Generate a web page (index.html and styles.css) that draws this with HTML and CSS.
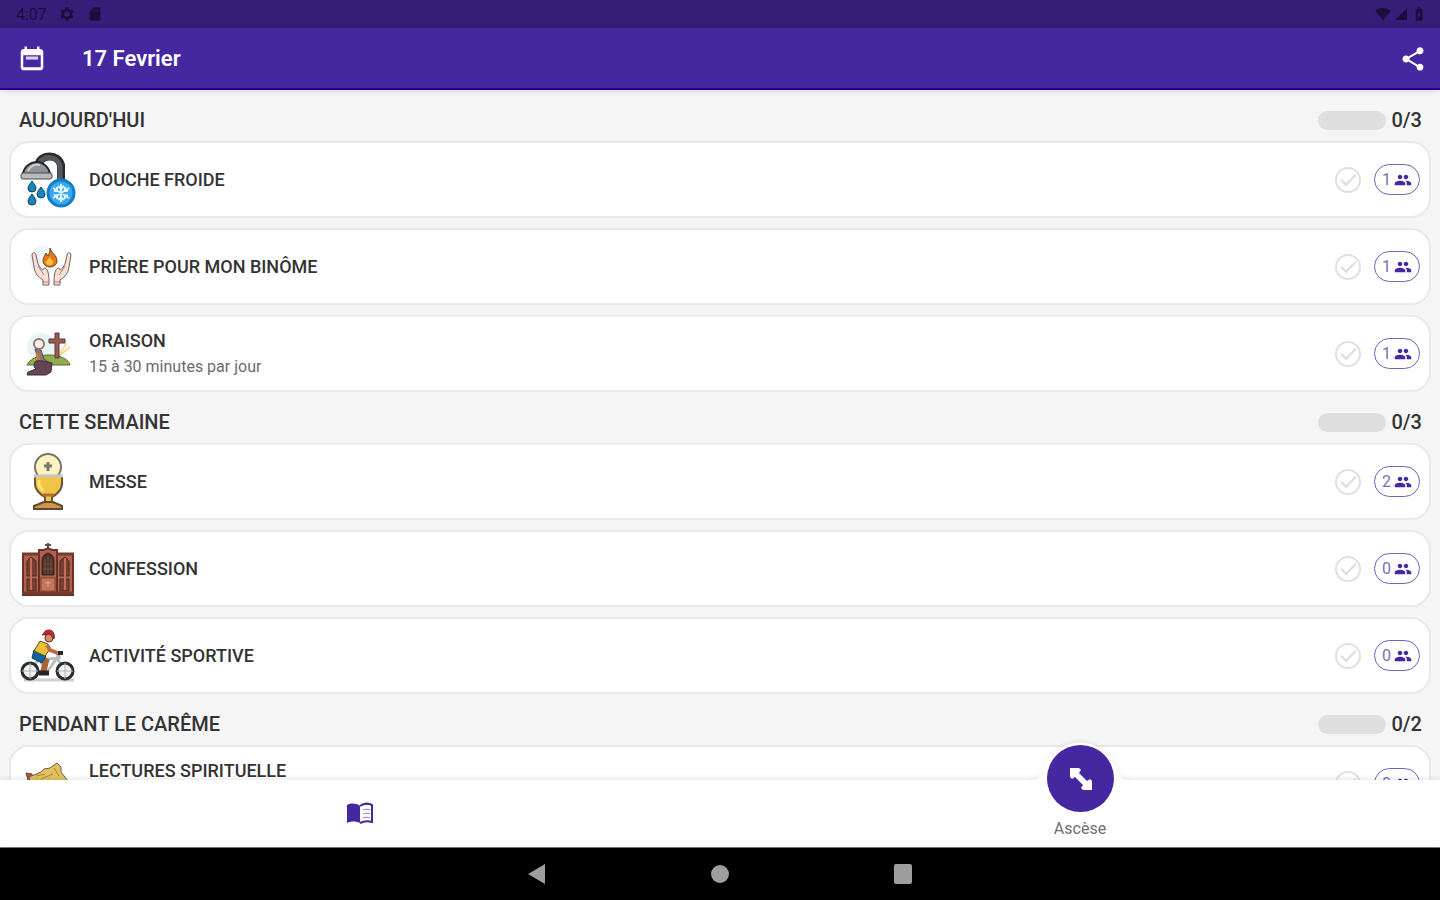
FILE: index.html
```html
<!DOCTYPE html>
<html lang="fr">
<head>
  <meta charset="UTF-8" />
  <meta name="viewport" content="width=device-width, initial-scale=1.0" />
  <title>17 Fevrier</title>
  <link rel="stylesheet" href="styles.css">
</head>
<body>

  <!-- Shared icons -->
  <svg class="sprite" aria-hidden="true">
    <symbol id="people" viewBox="0 0 24 24">
      <path d="M16 11c1.66 0 2.99-1.34 2.99-3S17.66 5 16 5s-3 1.34-3 3 1.34 3 3 3zm-8 0c1.66 0 2.99-1.34 2.99-3S9.66 5 8 5 5 6.34 5 8s1.34 3 3 3zm0 2c-2.33 0-7 1.17-7 3.500V19h14v-2.500C15 14.170 10.330 13 8 13zm8 0c-.29 0-.62.02-.97.05 1.160.84 1.970 1.970 1.970 3.450V19h6v-2.500c0-2.330-4.670-3.500-7-3.500z" />
    </symbol>
  </svg>

  <div class="status-bar">
    <div class="status-group">
      <span>4:07</span>
      <svg class="status-icon" viewBox="0 0 24 24"><circle cx="12" cy="12" r="6" fill="none" stroke="currentColor" stroke-width="4" /><path d="M12 2v4M12 18v4M3.300 7l3.500 2M17.200 15l3.500 2M3.300 17l3.500-2M17.200 9l3.500-2" stroke="currentColor" stroke-width="5" /></svg>
      <svg class="status-icon" viewBox="0 0 24 24"><path d="M10 2h8c1.100 0 2 .9 2 2v16c0 1.100-.9 2-2 2H6c-1.100 0-2-.9-2-2V8z" /><path d="M9 6v3M12 5v4M15 5v4" stroke="#361d78" stroke-width="1" /></svg>
    </div>
    <div class="status-group right">
      <svg class="status-icon" viewBox="0 0 24 24"><path d="M12 21.500L.4 7C.8 6.700 5 3 12 3s11.200 3.700 11.600 4z" /></svg>
      <svg class="status-icon" viewBox="0 0 24 24"><path d="M3 21h18V3z" /></svg>
      <svg class="status-icon" viewBox="0 0 24 24"><path fill-rule="evenodd" d="M15.700 4H14V2h-4v2H8.300C7.600 4 7 4.600 7 5.300v15.400c0 .7.600 1.300 1.300 1.300h7.400c.7 0 1.300-.6 1.300-1.300V5.300c0-.7-.6-1.300-1.300-1.300zM11 19v-5H9.500L13 8v5h1.500z" /></svg>
    </div>
  </div>

  <header class="app-bar">
    <button class="icon-button" aria-label="Calendrier">
      <svg class="calendar-icon" viewBox="0 0 24 24"><path fill-rule="evenodd" d="M18.500 4H18V2h-2v2H8V2H6v2h-.5C4 4 3 5 3 6.500v12C3 20 4 21 5.500 21h13c1.500 0 2.500-1 2.500-2.500v-12C21 5 20 4 18.500 4zm.5 14.500H5V9h14v9.500z" /><path d="M7 10h10v2.500H7z" opacity=".8" /></svg>
    </button>
    <h1>17 Fevrier</h1>
    <button class="icon-button" aria-label="Partager">
      <svg class="share-icon" viewBox="0 0 24 24"><path d="M18 16.080c-.76 0-1.440.3-1.960.77L8.910 12.700c.05-.23.09-.46.09-.7s-.04-.47-.09-.7l7.050-4.110c.54.5 1.250.81 2.040.81 1.660 0 3-1.340 3-3s-1.340-3-3-3-3 1.340-3 3c0 .24.04.47.09.7L8.040 9.810C7.500 9.310 6.790 9 6 9c-1.660 0-3 1.340-3 3s1.340 3 3 3c.79 0 1.500-.31 2.040-.81l7.120 4.160c-.05.21-.08.43-.08.65 0 1.610 1.310 2.920 2.920 2.920s2.920-1.310 2.920-2.920-1.310-2.920-2.920-2.920z" /></svg>
    </button>
  </header>

  <main class="content">
    <section>
      <div class="section-header">
        <h2>AUJOURD'HUI</h2>
        <div class="progress"></div>
        <span class="count">0/3</span>
      </div>
      <ul class="cards">
        <li class="card">
          <!-- shower -->
          <svg class="picture" viewBox="0 0 54 54">
            <path d="M18 10C20 2 37 0 40 12V29" fill="none" stroke="#292c2f" stroke-width="8" />
            <path d="M19 9C23 3 36 2 39 13V29" fill="none" stroke="#56595c" stroke-width="5" />
            <path d="M2 21C3 13 10 9 16 9s12 5 13 12z" fill="#919497" stroke="#25282b" stroke-width="2" />
            <path d="M7 18c2-5 7-7 12-6" fill="none" stroke="#d0d2d3" stroke-width="2" />
            <rect x="0" y="20" width="31" height="6" rx="2" fill="#b9bbbc" stroke="#45484b" />
            <path d="M11 28c-2 3-4 5-4 7a4 4 0 0 0 8 0c0-2-2-4-4-7zM20 34c-2 3-4 5-4 7a4 4 0 0 0 8 0c0-2-2-4-4-7zM11 41c-2 3-4 5-4 7a4 4 0 0 0 8 0c0-2-2-4-4-7z" fill="#1685c1" stroke="#173e55" />
            <circle cx="40" cy="40" r="13" fill="#36a9f1" stroke="#137cc3" stroke-width="3" />
            <path d="M40 31v18M32 35l16 10M32 45l16-10M37 33l3 3 3-3M37 47l3-3 3 3M33 38l3-1v-3M47 42l-3 1v3M33 42l3 1v3M47 38l-3-1v-3" fill="none" stroke="#dff5ff" stroke-width="2" />
          </svg>
          <div class="card-text"><h3>DOUCHE FROIDE</h3></div>
          <input type="checkbox" class="tick" aria-label="Douche froide">
          <button class="badge">1 <svg><use href="#people" /></svg></button>
        </li>
        <li class="card">
          <!-- hands around a flame -->
          <svg class="picture" viewBox="0 0 54 54">
            <circle cx="22" cy="20" r="14" fill="#edf7fa" />
            <path d="M22 45v-5c-6-4-8-7-9-13l-2-12c0-3 4-3 4 0l2 9c2 3 3 5 5 6 1-4 4-1 5 2 1 4 1 8 1 13z" fill="#f8ded3" stroke="#76635f" stroke-width="1" />
            <path d="M39 45v-5c6-4 8-7 9-13l2-12c0-3-4-3-4 0l-2 9c-2 3-3 5-5 6-1-4-4-1-5 2-1 4-1 8-1 13z" fill="#f8ded3" stroke="#76635f" stroke-width="1" />
            <path d="M17 26l6 9M44 26l-6 9M21 42h7M33 42h7" stroke="#a67f75" />
            <path d="M29 8c1 5 7 7 7 13a7 6 0 0 1-14 0c0-4 2-5 3-8l2 3c2-3 2-5 2-8z" fill="#e77818" stroke="#794117" />
            <path d="M29 17c1 3 4 3 3 6-1 3-6 3-7 0-1-2 2-3 4-6z" fill="#ffc13c" />
          </svg>
          <div class="card-text"><h3>PRIÈRE POUR MON BINÔME</h3></div>
          <input type="checkbox" class="tick" aria-label="Prière pour mon binôme">
          <button class="badge">1 <svg><use href="#people" /></svg></button>
        </li>
        <li class="card">
          <!-- kneeling figure and cross -->
          <svg class="picture" viewBox="0 0 54 54">
            <circle cx="20" cy="20" r="14" fill="#e8f3f6" />
            <path d="M38 29l11-9M39 26l7-10" stroke="#f7d99a" stroke-width="2" />
            <path d="M6 38c2-5 10-10 22-10s20 5 21 10z" fill="#91ac4b" stroke="#56672f" />
            <path d="M34 6h4v6h6v4h-6v15h-4V16h-6v-4h6z" fill="#965c51" stroke="#5b3936" />
            <path d="M14 22l6 1 3 9 4 3-2 3-7-3z" fill="#8d7770" stroke="#574744" />
            <path d="M16 26l2 9" stroke="#c77a3d" stroke-width="3" />
            <path d="M15 34c6-1 12 1 16 2l-1 9-5 3H6l1-3 8-3c-3-2-2-6 0-8z" fill="#664353" stroke="#3e3039" />
            <circle cx="18" cy="17" r="5" fill="#fff4ed" stroke="#8a7773" stroke-width="2" />
          </svg>
          <div class="card-text">
            <h3>ORAISON</h3>
            <p>15 à 30 minutes par jour</p>
          </div>
          <input type="checkbox" class="tick" aria-label="Oraison">
          <button class="badge">1 <svg><use href="#people" /></svg></button>
        </li>
      </ul>
    </section>

    <section>
      <div class="section-header">
        <h2>CETTE SEMAINE</h2>
        <div class="progress"></div>
        <span class="count">0/3</span>
      </div>
      <ul class="cards">
        <li class="card">
          <!-- chalice -->
          <svg class="picture" viewBox="0 0 54 54">
            <circle cx="27" cy="12" r="13" fill="#fff2c2" stroke="#77766b" stroke-width="2" />
            <path d="M27 7v9M23 11h8" stroke="#77786d" stroke-width="3" />
            <path d="M14 21h27v8c0 6-6 11-10 13v6h-7v-6c-4-2-10-7-10-13z" fill="#f1c443" stroke="#6a563a" stroke-width="2" />
            <path d="M18 25v5l4 6" fill="none" stroke="#ffe47d" stroke-width="3" />
            <path d="M13 21h29" stroke="#c7c5bd" stroke-width="3" />
            <path d="M22 40h11" stroke="#b46c2f" stroke-width="3" />
            <path d="M23 47h9l9 4v3H13v-3z" fill="#d59547" stroke="#5d4939" stroke-width="2" />
          </svg>
          <div class="card-text"><h3>MESSE</h3></div>
          <input type="checkbox" class="tick" aria-label="Messe">
          <button class="badge">2 <svg><use href="#people" /></svg></button>
        </li>
        <li class="card">
          <!-- confessional -->
          <svg class="picture" viewBox="0 0 54 54">
            <path d="M27 1v7M24 3h6" stroke="#56504f" stroke-width="2" />
            <path d="M2 12h16V8h5l4-2 4 2h5v4h16v41H2z" fill="#b35f49" stroke="#633427" stroke-width="2" />
            <path d="M6 19l4-4 5 4v15H6zM39 19l5-4 4 4v15h-9zM6 37h9v12H6zM39 37h9v12h-9z" fill="#7b3d31" stroke="#4c2a26" />
            <path d="M10 16v32M44 16v32" stroke="#c17056" stroke-width="2" />
            <path d="M21 33V18c0-4 3-6 6-7 3 1 6 3 6 7v15z" fill="#49302c" stroke="#37231f" />
            <path d="M24 17v15M27 14v18M30 17v15M22 22h10M22 27h10" stroke="#76503f" />
            <path d="M18 12v39M36 12v39" stroke="#5f3329" stroke-width="2" />
            <rect x="20" y="36" width="14" height="13" fill="#c4755b" stroke="#85442f" />
            <path d="M27 39v6M24 41h6" stroke="#e4a386" />
            <path d="M1 12h17M36 12h17M1 51h52" stroke="#753c2e" stroke-width="3" />
          </svg>
          <div class="card-text"><h3>CONFESSION</h3></div>
          <input type="checkbox" class="tick" aria-label="Confession">
          <button class="badge">0 <svg><use href="#people" /></svg></button>
        </li>
        <li class="card">
          <!-- cyclist -->
          <svg class="picture" viewBox="0 0 54 54">
            <path d="M3 51h50" stroke="#ced0d1" stroke-width="3" />
            <path d="M9 42l9-12 8 13 10-14 8 13M18 31l20-2M26 43H9M36 24l3 6" fill="none" stroke="#babfc1" stroke-width="3" />
            <circle cx="9" cy="42" r="8" fill="#eff1f2" stroke="#292d30" stroke-width="3" />
            <circle cx="44" cy="42" r="8" fill="#eff1f2" stroke="#292d30" stroke-width="3" />
            <path d="M9 34v16M1 42h16M44 34v16M36 42h16" stroke="#b0b5b7" />
            <path d="M19 28l6 4-3 12" fill="none" stroke="#a76237" stroke-width="6" />
            <path d="M18 44h10" stroke="#292522" stroke-width="5" />
            <path d="M13 21l12 6-4 7-10-5z" fill="#0868a5" stroke="#203746" />
            <path d="M19 12l8 3 2 5-5 7-11-5z" fill="#efbf33" stroke="#55472e" />
            <path d="M26 16l3 5 10 4" fill="none" stroke="#b96e43" stroke-width="4" />
            <path d="M37 24h5" stroke="#252a30" stroke-width="4" />
            <circle cx="28" cy="9" r="4" fill="#d49264" stroke="#4f3328" />
            <path d="M21 6c2-1 2-5 7-5 4 0 6 4 5 9l-4-5z" fill="#c9242d" stroke="#751f26" />
          </svg>
          <div class="card-text"><h3>ACTIVITÉ SPORTIVE</h3></div>
          <input type="checkbox" class="tick" aria-label="Activité sportive">
          <button class="badge">0 <svg><use href="#people" /></svg></button>
        </li>
      </ul>
    </section>

    <section>
      <div class="section-header">
        <h2>PENDANT LE CARÊME</h2>
        <div class="progress"></div>
        <span class="count">0/2</span>
      </div>
      <ul class="cards">
        <li class="card">
          <!-- old book -->
          <svg class="picture" viewBox="0 0 54 54">
            <path d="M5 16l6 1 2 9-6-3z" fill="#bb5549" stroke="#65443a" />
            <path d="M8 20l12-5 3-3 6-1 7-5 4 4v5l7 9-8 14-28-7z" fill="#e3c15f" stroke="#725b35" />
            <path d="M15 19l9-2M20 22l12-5M33 11l5 8" stroke="#a38742" />
          </svg>
          <div class="card-text">
            <h3>LECTURES SPIRITUELLE</h3>
            <p></p>
          </div>
          <input type="checkbox" class="tick" aria-label="Lectures spirituelle">
          <button class="badge">0 <svg><use href="#people" /></svg></button>
        </li>
      </ul>
    </section>
  </main>

  <nav class="tab-bar">
    <button class="tab" aria-label="Lectures">
      <svg class="book-icon" viewBox="0 0 28 24"><path d="M1 3c4-2 9-2 13 1v17c-4-2-9-2-13 0z" /><path d="M14 4c4-3 8-3 12-1v17c-4-1-8-1-12 1" fill="none" stroke="currentColor" stroke-width="2" /><path d="M17 8c2-1 5-1 7 0M17 12c2-1 5-1 7 0M17 16c2-1 5-1 7 0" fill="none" stroke="currentColor" stroke-width="1" opacity=".6" /></svg>
    </button>
    <button class="tab active">
      <svg class="bump" viewBox="0 0 100 42"><path d="M0 41h3q7 0 9-7a39 39 0 0 1 76 0q2 7 9 7h3v1H0z" /></svg>
      <span class="fab">
        <svg viewBox="0 0 24 24"><path d="M1 1h9l2 2-2 3 8 8 3-2 2 2v9h-9l-2-2 2-3-8-8-3 2-2-2z" /></svg>
      </span>
      <span class="tab-label">Ascèse</span>
    </button>
  </nav>

  <div class="system-nav">
    <button aria-label="Retour"><svg viewBox="0 0 20 20"><path d="M1 10L18 0v20z" /></svg></button>
    <button aria-label="Accueil"><svg viewBox="0 0 20 20"><ellipse cx="10" cy="10" rx="9" ry="9" /></svg></button>
    <button aria-label="Applications"><svg viewBox="0 0 20 20"><rect x="1" y="0" width="18" height="20" rx="2" /></svg></button>
  </div>

</body>
</html>
```

FILE: styles.css
```css
* {
  box-sizing: border-box;
}

body {
  margin: 0;
  height: 100vh;
  display: flex;
  flex-direction: column;
  overflow: hidden;
  background-color: #f5f5f5;
  color: #333;
  font-family: Roboto, sans-serif;
}

h1, h2, h3, p, ul {
  margin: 0;
  padding: 0;
}

button {
  padding: 0;
  border: none;
  background: none;
  color: inherit;
  font-family: inherit;
  cursor: pointer;
}

svg {
  display: block;
  fill: currentColor;
}

.sprite {
  display: none;
}

/* Status bar */
.status-bar {
  flex: none;
  height: 28px;
  padding: 0 13px 0 16px;
  display: flex;
  align-items: center;
  justify-content: space-between;
  background-color: #361d78;
  color: #1a0f3c;
  font-size: 16px;
}

.status-group {
  display: flex;
  align-items: center;
  gap: 12px;
}

.status-group.right {
  gap: 2px;
}

.status-icon {
  width: 16px;
  height: 16px;
}

/* App bar */
.app-bar {
  flex: none;
  height: 62px;
  padding: 1px 13px 0 17px;
  display: flex;
  align-items: center;
  background-color: #4527a0;
  border-bottom: 2px solid #280091;
  color: white;
  box-shadow: 0 1px 6px rgba(0, 0, 0, 0.12);
  z-index: 1;
}

.app-bar h1 {
  flex: 1;
  margin-left: 35px;
  font-size: 22px;
  line-height: 26px;
  font-weight: 600;
}

.calendar-icon {
  width: 30px;
  height: 30px;
}

.share-icon {
  width: 28px;
  height: 28px;
}

/* Lists */
.content {
  flex: 1;
  min-height: 0;
  padding: 0 9px;
  overflow-y: auto;
  scrollbar-width: none;
}

.section-header {
  height: 51px;
  padding: 9px 9px 0 10px;
  display: flex;
  align-items: center;
}

.section-header h2 {
  flex: 1;
  font-size: 20px;
  font-weight: 500;
}

.progress {
  width: 68px;
  height: 19px;
  margin-right: 5px;
  border-radius: 10px;
  background-color: #dfdfdf;
}

.count {
  font-size: 20px;
  font-weight: 500;
}

.cards {
  display: flex;
  flex-direction: column;
  gap: 10px;
  list-style: none;
}

.card {
  height: 77px;
  padding: 0 9px 0 10px;
  display: flex;
  align-items: center;
  background-color: white;
  border: 2px solid #e9e9e9;
  border-radius: 20px;
}

.picture {
  flex: none;
  width: 54px;
  height: 54px;
  overflow: visible;
}

.card-text {
  flex: 1;
  margin-left: 14px;
}

.card h3 {
  font-size: 18px;
  line-height: 26px;
  font-weight: 500;
}

.card p {
  min-height: 26px;
  font-size: 16px;
  line-height: 26px;
  color: #6b6b6b;
}

.tick {
  appearance: none;
  width: 26px;
  height: 26px;
  margin: 0 13px 0 0;
  display: grid;
  place-items: center;
  border: 2px solid #e0e0e0;
  border-radius: 50%;
}

.tick::before {
  content: "";
  width: 13px;
  height: 6px;
  border-left: 2px solid #dcdcdc;
  border-bottom: 2px solid #dcdcdc;
  transform: translateY(-2px) rotate(-45deg);
}

.tick:checked {
  border-color: #4527a0;
}

.badge {
  width: 46px;
  height: 31px;
  display: flex;
  align-items: center;
  justify-content: center;
  gap: 3px;
  border: 1px solid #7560bc;
  border-radius: 16px;
  color: #7c6bb9;
  font-size: 16px;
}

.badge svg {
  width: 18px;
  height: 18px;
  color: #4527a0;
}

/* Bottom tabs */
.tab-bar {
  position: relative;
  flex: none;
  height: 67px;
  display: flex;
  background-color: white;
  box-shadow: 0 -1px 6px rgba(0, 0, 0, 0.1);
}

.tab {
  position: relative;
  flex: 1;
  display: flex;
  align-items: center;
  justify-content: center;
  color: #4527a0;
}

.book-icon {
  width: 28px;
  height: 24px;
}

.bump {
  position: absolute;
  top: -41px;
  left: 50%;
  width: 100px;
  height: 42px;
  margin-left: -50px;
  color: white;
  filter: drop-shadow(0 -2px 2px rgba(0, 0, 0, 0.05));
}

.fab {
  position: absolute;
  top: -35px;
  left: 50%;
  width: 67px;
  height: 67px;
  margin-left: -33px;
  display: grid;
  place-items: center;
  border-radius: 50%;
  background-color: #4527a0;
  color: white;
}

.fab svg {
  width: 24px;
  height: 24px;
}

.tab-label {
  align-self: flex-end;
  margin-bottom: 8px;
  font-size: 16px;
  line-height: 20px;
  color: #707070;
}

/* System buttons */
.system-nav {
  flex: none;
  height: 53px;
  display: flex;
  align-items: center;
  justify-content: center;
  gap: 163px;
  background-color: black;
  border-top: 1px solid #777;
  color: #9e9e9e;
}

.system-nav svg {
  width: 20px;
  height: 20px;
}
```
